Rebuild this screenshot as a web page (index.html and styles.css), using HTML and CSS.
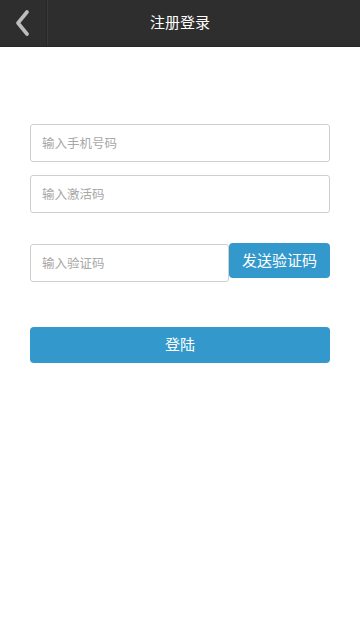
FILE: index.html
```html
<!DOCTYPE html>
<html lang="zh">
<head>
<meta charset="utf-8">
<meta name="viewport" content="width=360">
<link rel="stylesheet" href="styles.css">
</head>
<body>
<header class="topbar">
  <div class="back">
    <svg width="18" height="26" viewBox="0 0 18 26"><path d="M13 2 L4 13 L13 24" fill="none" stroke="#bdbdbd" stroke-width="3.6" stroke-linecap="round" stroke-linejoin="round"/></svg>
  </div>
  <div class="title">注册登录</div>
</header>
<main class="form">
  <div class="field"><span class="ph">输入手机号码</span></div>
  <div class="field"><span class="ph">输入激活码</span></div>
  <div class="coderow">
    <div class="field code"><span class="ph">输入验证码</span></div>
    <div class="sendbtn">发送验证码</div>
  </div>
  <div class="loginbtn">登陆</div>
</main>
</body>
</html>
```
FILE: styles.css
```css
* { box-sizing: border-box; }
html, body { margin: 0; padding: 0; }
body {
  width: 360px;
  height: 640px;
  background: #fff;
  font-family: "Noto Sans CJK SC", "Noto Sans", sans-serif;
}
.topbar {
  height: 47px;
  background: #2e2e2e;
  border-bottom: 1px solid #262626;
  display: flex;
  align-items: center;
  position: relative;
}
.back {
  width: 47px;
  height: 100%;
  display: flex;
  align-items: center;
  justify-content: center;
  border-right: 1px solid #262626;
  box-shadow: 1px 0 0 #3a3a3a;
}
.title {
  position: absolute;
  left: 0;
  right: 0;
  text-align: center;
  color: #fff;
  font-size: 15px;
  line-height: 44px;
  top: 0;
  pointer-events: none;
}
.form {
  padding: 77px 30px 0 30px;
  display: flex;
  flex-direction: column;
}
.field {
  height: 38px;
  border: 1px solid #cfcfcf;
  border-radius: 3px;
  display: flex;
  align-items: center;
  padding-left: 11px;
  padding-bottom: 1px;
  margin-bottom: 13px;
}
.ph {
  color: #a8a8a8;
  font-size: 12.5px;
}
.coderow {
  display: flex;
  align-items: flex-start;
  margin-top: 17px;
}
.field.code {
  width: 199px;
  margin-bottom: 0;
  margin-top: 1px;
}
.sendbtn {
  width: 101px;
  height: 35px;
  padding-bottom: 3px;
  background: #3399cc;
  border-radius: 4px;
  color: #fff;
  font-size: 15px;
  display: flex;
  align-items: center;
  justify-content: center;
}
.loginbtn {
  margin-top: 45px;
  height: 36px;
  padding-bottom: 3px;
  background: #3399cc;
  border-radius: 4px;
  color: #fff;
  font-size: 15px;
  display: flex;
  align-items: center;
  justify-content: center;
}
```
